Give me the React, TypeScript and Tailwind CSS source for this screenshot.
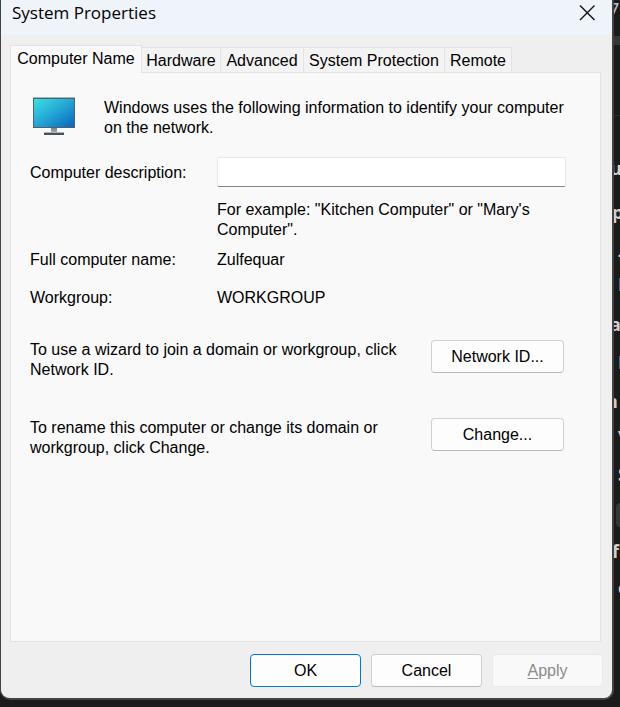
import React from "react";

const tabs = [
  { name: "Hardware", width: "w-[79px]" },
  { name: "Advanced", width: "w-[83px]" },
  { name: "System Protection", width: "w-[141px]" },
  { name: "Remote", width: "w-[67px]" },
];

// Edge of the application that lies behind the dialog.
const behind = [
  { text: "7", row: "h-[36px] -ml-1 text-[#b9c4d4] text-xl leading-5 font-normal" },
  { text: "", row: "h-[9px] bg-[#363636]" },
  { text: "", row: "h-[71px] border-b border-[#2b2b2b]" },
  { text: "u", row: "h-[78px] -ml-0.5 pt-[42px]" },
  { text: "p", row: "h-[50px] pt-2" },
  { text: "-", row: "h-[30px] pl-1.5" },
  { text: "E", row: "h-[40px] pl-1.5" },
  { text: "a", row: "h-[38px] -ml-0.5" },
  { text: "E", row: "h-[39px] pl-1.5" },
  { text: "n", row: "h-[33px] -ml-1.5" },
  { text: "v", row: "h-[40px] pl-1.5" },
  { text: "S", row: "h-[39px] pl-1.5" },
];

function Monitor() {
  return (
    <svg width="44" height="40" viewBox="0 0 44 40" aria-hidden="true" className="shrink-0">
      <defs>
        <linearGradient id="screen" x1="0" y1="0" x2="1" y2="1">
          <stop offset="0" stopColor="#3be0e6" />
          <stop offset="0.5" stopColor="#24a5d5" />
          <stop offset="1" stopColor="#0766bd" />
        </linearGradient>
        <linearGradient id="neck" x1="0" y1="0" x2="0" y2="1">
          <stop offset="0" stopColor="#77838d" />
          <stop offset="1" stopColor="#adb6bd" />
        </linearGradient>
      </defs>
      <rect x="1" y="0" width="42" height="31" rx="0.5" fill="#52606b" />
      <rect x="1" y="0" width="42" height="1" fill="#a9b5be" />
      <rect x="2" y="2" width="40" height="28" fill="url(#screen)" />
      <rect x="19" y="31" width="6" height="5" fill="url(#neck)" />
      <rect x="12" y="35" width="20" height="1" fill="#aab4bb" />
      <rect x="12" y="36" width="20" height="2" fill="#46525b" />
    </svg>
  );
}

const button =
  "h-[33px] shrink-0 rounded border border-[#d0d0d0] border-b-[#b8b8b8] bg-[#fdfdfd] text-center leading-5";

export default function App() {
  return (
    <div className="relative flex min-h-screen overflow-hidden bg-[#1b1b1b] pr-[6px] pb-[7px] font-['Liberation_Sans',Arial,sans-serif] text-base leading-5 text-black">
      <div
        aria-hidden="true"
        className="absolute inset-y-0 right-0 w-2 overflow-hidden font-['Open_Sans',sans-serif] text-lg leading-5 font-bold text-[#d0d0d0]"
      >
        {behind.map((item, i) => (
          <div key={i} className={item.row}>
            {item.text}
          </div>
        ))}
        <div className="ml-1 h-6 w-4 rounded bg-[#363636]" />
        <div className="h-[38px] pt-[14px]">f</div>
        <div className="h-[38px] pt-3 pl-1.5">c</div>
      </div>

      <section
        role="dialog"
        aria-labelledby="title"
        className="relative flex flex-1 flex-col rounded-b-[10px] border-r-2 border-b-2 border-l border-[#434343] bg-[#efefef]"
      >
        <header className="flex h-[35px] items-start justify-between bg-[#eff3fa] pl-[11px]">
          <h1 id="title" className="pt-px font-['Open_Sans',sans-serif] text-[17px] leading-6">
            System Properties
          </h1>
          <button type="button" aria-label="Close" className="px-4 pt-1">
            <svg width="18" height="18" viewBox="0 0 18 18" fill="none" stroke="#111" strokeWidth="1.4">
              <path d="M2 1.5 16.5 16M16.5 1.5 2 16" />
            </svg>
          </button>
        </header>

        <div role="tablist" className="mt-[10px] flex items-end pl-[9px]">
          <button
            type="button"
            role="tab"
            aria-selected="true"
            className="relative -mb-px h-7 w-[132px] border border-b-0 border-[#e3e3e3] bg-[#f9f9f9] pb-px"
          >
            Computer Name
          </button>
          {tabs.map((tab) => (
            <button
              key={tab.name}
              type="button"
              role="tab"
              aria-selected="false"
              className={`h-[25px] border-t border-r border-[#e3e3e3] bg-[#f3f3f3] pt-0.5 whitespace-nowrap ${tab.width}`}
            >
              {tab.name}
            </button>
          ))}
        </div>

        <main
          role="tabpanel"
          className="mr-[11px] ml-[9px] flex-1 border border-[#e3e3e3] bg-[#f9f9f9] pt-6 pr-[34px] pl-[19px]"
        >
          <div className="flex gap-7 pl-[2px]">
            <Monitor />
            <p className="pt-px">
              Windows uses the following information to identify your computer on the network.
            </p>
          </div>

          <div className="mt-[19px] grid grid-cols-[187px_1fr]">
            <label htmlFor="description" className="pt-[6px]">
              Computer description:
            </label>
            <input
              id="description"
              type="text"
              className="h-[30px] w-full rounded-xs border border-[#e8e8e8] border-b-[#868686] bg-white px-1"
            />
            <p className="col-start-2 mt-[13px]">For example: "Kitchen Computer" or "Mary's Computer".</p>
          </div>

          <dl className="mt-[10px] grid grid-cols-[187px_1fr] gap-y-[18px]">
            <dt>Full computer name:</dt>
            <dd>Zulfequar</dd>
            <dt>Workgroup:</dt>
            <dd>WORKGROUP</dd>
          </dl>

          <div className="mt-8 flex flex-col gap-[38px] pr-[2px]">
            <div className="flex justify-between gap-7">
              <p>To use a wizard to join a domain or workgroup, click Network ID.</p>
              <button type="button" className={`w-[133px] ${button}`}>
                Network ID...
              </button>
            </div>
            <div className="flex justify-between gap-7">
              <p>To rename this computer or change its domain or workgroup, click Change.</p>
              <button type="button" className={`w-[133px] ${button}`}>
                Change...
              </button>
            </div>
          </div>
        </main>

        <footer className="flex justify-end gap-[10px] pt-3 pr-[9px] pb-[11px]">
          <button
            type="button"
            className="h-[33px] w-[111px] rounded border border-[#0078d4] bg-[#fdfdfd]"
          >
            OK
          </button>
          <button type="button" className={`w-[111px] ${button}`}>
            Cancel
          </button>
          <button
            type="button"
            disabled
            className="h-[33px] w-[111px] rounded border border-[#e9e9e9] bg-[#f9f9f9] text-[#8b8b8b]"
          >
            <span className="underline underline-offset-2">A</span>pply
          </button>
        </footer>
      </section>
    </div>
  );
}
